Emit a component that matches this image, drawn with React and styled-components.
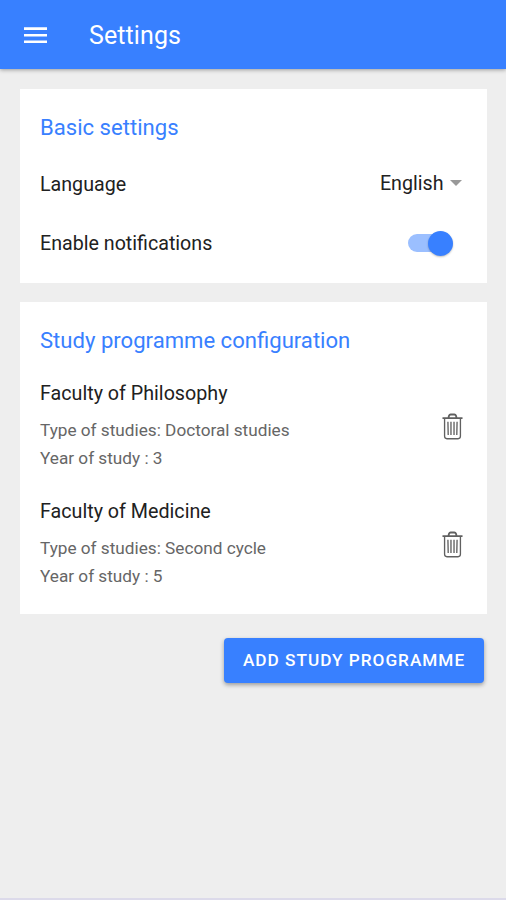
import React from 'react';
import styled, { createGlobalStyle } from 'styled-components';

const Global = createGlobalStyle`
  * { box-sizing: border-box; }
  body { margin: 0; background: #eeeeee; font-family: Roboto, sans-serif; color: #212121; }
`;
const Page = styled.div`
  height: 900px;
  overflow: hidden;
  background: #eeeeee;
  border-bottom: 2px solid #dcdaea;
`;
const AppBar = styled.header`
  height: 69px;
  display: flex;
  align-items: center;
  gap: 42px;
  padding: 2px 0 0 24px;
  background: #3880ff;
  color: #fff;
  box-shadow: 0 1px 4px rgba(0, 0, 0, 0.35);
`;
const MenuIcon = styled.svg`
  flex: none;
`;
const Title = styled.h1`
  margin: 0;
  font-size: 25px;
  font-weight: 400;
  line-height: 30px;
  letter-spacing: 0.1px;
`;
const Content = styled.main`
  display: flex;
  flex-direction: column;
  gap: 19px;
  padding: 20px 19px 0 20px;
`;
const Card = styled.section`
  height: ${(p) => p.$height}px;
  padding: 25px 20px 0;
  background: #fff;
`;
const CardTitle = styled.h2`
  margin: 0 0 ${(p) => p.$gap}px;
  font-size: 22.1px;
  line-height: 26px;
  font-weight: 400;
  color: #3880ff;
`;
const SettingRow = styled.div`
  height: 59px;
  display: flex;
  align-items: center;
  justify-content: space-between;
  font-size: 19.65px;
`;
const Select = styled.div`
  display: flex;
  align-items: center;
  gap: 6.5px;
  padding: 0 5px 2px 0;
`;
const Arrow = styled.svg`
  margin-bottom: 2px;
`;
const Track = styled.div`
  width: 44px;
  height: 18px;
  margin: 0 15px 1px 0;
  border-radius: 9px;
  background: #9bbfff;
  display: flex;
  align-items: center;
  justify-content: flex-end;
`;
const Knob = styled.div`
  flex: none;
  width: 25px;
  height: 25px;
  margin-right: -1px;
  border-radius: 50%;
  background: #3880ff;
  box-shadow: 0 1px 2px rgba(0, 0, 0, 0.25);
`;
const Programme = styled.div`
  height: 118px;
  display: flex;
  justify-content: space-between;
`;
const Faculty = styled.h3`
  margin: 0 0 10px;
  font-size: 19.7px;
  font-weight: 400;
  line-height: 24px;
`;
const Detail = styled.p`
  margin: 0;
  font-size: 17.2px;
  line-height: 28px;
  color: #666;
`;
const Trash = styled.svg`
  margin: 31px 4px 0 0;
`;
const Action = styled.button`
  align-self: flex-end;
  width: 260px;
  height: 44.5px;
  margin: 5px 3px 0 0;
  padding: 0;
  border: 0;
  border-radius: 4px;
  background: #3880ff;
  color: #fff;
  font: 500 17.2px Roboto, sans-serif;
  letter-spacing: 1px;
  box-shadow: 0 2px 4px rgba(0, 0, 0, 0.35);
`;

const programmes = [
  { faculty: 'Faculty of Philosophy', type: 'Doctoral studies', year: 3 },
  { faculty: 'Faculty of Medicine', type: 'Second cycle', year: 5 },
];

function TrashIcon() {
  return (
    <Trash width="21" height="27" viewBox="0 0 22 28" fill="none" stroke="#606060" strokeWidth="1.4">
      <path strokeWidth="1.9" d="M0.5 5.2H21.5M6.7 5L7.4 2.6Q7.8 1.4 9 1.4H13Q14.2 1.4 14.6 2.6L15.3 5" />
      <path d="M2.7 5.5V24.3Q2.7 26.8 5.2 26.8H16.8Q19.3 26.8 19.3 24.3V5.5M6.2 9L6.5 23M9.4 9V23M12.6 9V23M15.8 9L15.5 23" />
    </Trash>
  );
}

export default function App() {
  return (
    <Page>
      <Global />
      <AppBar>
        <MenuIcon width="23" height="17" viewBox="0 0 23 17" fill="#fff">
          <path d="M0 0.3H23V2.9H0ZM0 6.9H23V9.5H0ZM0 13.5H23V16.1H0Z" />
        </MenuIcon>
        <Title>Settings</Title>
      </AppBar>
      <Content>
        <Card $height={194}>
          <CardTitle $gap={15}>Basic settings</CardTitle>
          <SettingRow>
            <span>Language</span>
            <Select>
              English
              <Arrow width="12" height="6" viewBox="0 0 12 6"><path d="M0 0H12L6 6Z" fill="#999" /></Arrow>
            </Select>
          </SettingRow>
          <SettingRow>
            <span>Enable notifications</span>
            <Track><Knob /></Track>
          </SettingRow>
        </Card>
        <Card $height={312}>
          <CardTitle $gap={29}>Study programme configuration</CardTitle>
          <div>
            {programmes.map((p) => (
              <Programme key={p.faculty}>
                <div>
                  <Faculty>{p.faculty}</Faculty>
                  <Detail>Type of studies: {p.type}</Detail>
                  <Detail>Year of study : {p.year}</Detail>
                </div>
                <TrashIcon />
              </Programme>
            ))}
          </div>
        </Card>
        <Action>ADD STUDY PROGRAMME</Action>
      </Content>
    </Page>
  );
}
